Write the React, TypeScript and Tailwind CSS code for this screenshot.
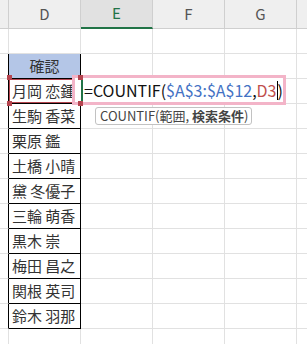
import React from "react";

const names = [
    "確認",
    "月岡 恋鍾",
    "生駒 香菜",
    "栗原 鑑",
    "土橋 小晴",
    "黛 冬優子",
    "三輪 萌香",
    "黒木 崇",
    "梅田 昌之",
    "関根 英司",
    "鈴木 羽那",
];

const font = { fontFamily: '"Noto Sans CJK JP", "Noto Sans", sans-serif' };

function HeaderRow() {
    return (
        <div className="flex h-[29px] bg-[#efefef] text-[15px] text-[#555]">
            <div className="w-[9px] shrink-0 border-r border-b border-[#cfcfcf]" />
            <div className="w-[72px] shrink-0 flex items-center justify-center border-r border-b border-[#cfcfcf]">D</div>
            <div className="w-[72px] shrink-0 flex items-center justify-center border-r border-b-2 border-r-[#cfcfcf] border-b-[#217346] bg-[#e1e1e1] text-[#217346]">E</div>
            <div className="w-[72px] shrink-0 flex items-center justify-center border-r border-b border-[#cfcfcf]">F</div>
            <div className="w-[72px] shrink-0 flex items-center justify-center border-r border-b border-[#cfcfcf]">G</div>
            <div className="flex-1 border-b border-[#cfcfcf]" />
        </div>
    );
}

function Handle({ className }: { className: string }) {
    return <div className={"absolute w-[5px] h-[5px] bg-[#b5454f] " + className} />;
}

function Row({ index, name }: { index: number; name?: string }) {
    const inTable = name !== undefined;
    const isHead = index === 0;
    const isTarget = index === 1;
    return (
        <div className="flex h-[25px]">
            <div className={"w-[9px] shrink-0 border-r border-b border-b-[#e1e1e1] " + (inTable ? "border-r-black" : "border-r-[#e1e1e1]")} />
            <div
                className={
                    "relative w-[72px] shrink-0 border-r border-b flex items-center overflow-hidden whitespace-nowrap text-[15px] text-[#333] " +
                    (inTable ? "border-black " : "border-[#e1e1e1] ") +
                    (isHead ? "justify-center bg-[#b4c6e7]" : "pl-[3px]")
                }
            >
                {name}
                {isTarget && <div className="absolute inset-[-1px] border-2 border-[#b5454f]" />}
            </div>
            <div className="w-[72px] shrink-0 border-r border-b border-[#e1e1e1]" />
            <div className="w-[72px] shrink-0 border-r border-b border-[#e1e1e1]" />
            <div className="w-[72px] shrink-0 border-r border-b border-[#e1e1e1]" />
            <div className="flex-1 border-b border-[#e1e1e1]" />
        </div>
    );
}

export default function App() {
    return (
        <div className="relative w-[307px] h-[344px] overflow-hidden bg-white" style={font}>
            <HeaderRow />
            <Row index={-1} />
            <div className="flex flex-col">
                {names.map((n, i) => (
                    <Row key={i} index={i} name={n} />
                ))}
            </div>
            <Row index={-1} />

            {/* formula editor over E3 */}
            <div className="absolute left-[72px] top-[75px] w-[214px] h-[30px] border-[3px] border-[#f3b4c8] bg-white flex items-center pl-[9px] text-[16px] text-[#111] whitespace-nowrap">
                <span>=COUNTIF(</span>
                <span className="text-[#4472c4]">$A$3:$A$12</span>
                <span>,</span>
                <span className="text-[#c0504d]">D3</span>
                <span className="w-px h-[19px] bg-black" />
                <span>)</span>
            </div>
            <div className="absolute left-[81px] top-[80px] w-[2px] h-[21px] bg-[#217346]" />

            <Handle className="left-[7px] top-[75px]" />
            <Handle className="left-[78px] top-[75px]" />
            <Handle className="left-[7px] top-[101px]" />
            <Handle className="left-[78px] top-[101px]" />

            {/* argument tooltip */}
            <div className="absolute left-[95px] top-[107px] w-[157px] h-[18px] pl-[4px] border border-[#c2c2c2] rounded-[3px] bg-white flex items-center gap-[3px] text-[13px] text-[#444] whitespace-nowrap">
                <span>COUNTIF(範囲,</span>
                <span><span className="font-bold">検索条件</span>)</span>
            </div>
        </div>
    );
}
